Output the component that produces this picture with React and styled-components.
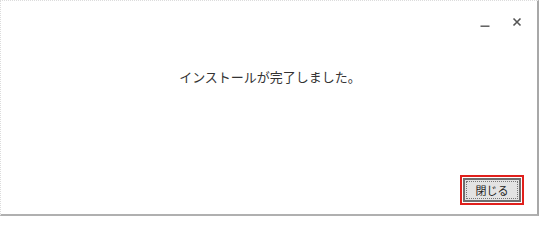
import React from "react";
import styled, { createGlobalStyle } from "styled-components";

const Global = createGlobalStyle`
  html, body {
    margin: 0;
    padding: 0;
    background: #ffffff;
  }
  body {
    font-family: "Noto Sans CJK JP", "Noto Sans", sans-serif;
  }
`;

const Window = styled.div`
  box-sizing: border-box;
  width: 539px;
  height: 216px;
  background: #ffffff;
  border-top: 1px dotted #dcdcdc;
  border-left: 1px dotted #dcdcdc;
  border-right: 2px solid #a8a8a8;
  border-bottom: 2px solid #b0b0b0;
  display: flex;
  flex-direction: column;
`;

const TitleBar = styled.div`
  display: flex;
  justify-content: flex-end;
  align-items: center;
  gap: 10px;
  height: 41px;
  padding-right: 9px;
`;

const Control = styled.button`
  width: 22px;
  height: 22px;
  padding: 0;
  border: none;
  background: transparent;
  display: flex;
  align-items: center;
  justify-content: center;
  cursor: pointer;
`;

const Body = styled.div`
  flex: 1;
  display: flex;
  justify-content: center;
  padding-top: 25px;
  padding-left: 2px;
`;

const Message = styled.p`
  margin: 0;
  font-size: 13px;
  line-height: 20px;
  color: #333333;
`;

const Footer = styled.div`
  display: flex;
  justify-content: flex-end;
  padding: 0 13px 9px 0;
`;

const FocusRing = styled.div`
  border: 2px solid #e0201c;
  padding: 1px;
`;

const Button = styled.button`
  box-sizing: border-box;
  width: 58px;
  height: 24px;
  padding: 1px;
  border: 2px solid #6e6e6e;
  background: #e3e3e3;
  display: flex;
  cursor: pointer;
`;

const ButtonInner = styled.span`
  flex: 1;
  display: flex;
  align-items: center;
  justify-content: center;
  border: 1px dotted #777777;
  font-family: "Noto Sans CJK JP", sans-serif;
  font-size: 11px;
  color: #222222;
  line-height: 1;
`;

export default function App() {
  return (
    <>
      <Global />
      <Window>
        <TitleBar>
          <Control aria-label="minimize">
            <svg width="12" height="12" viewBox="0 0 12 12">
              <rect x="1.5" y="9.5" width="9" height="1.4" fill="#555" />
            </svg>
          </Control>
          <Control aria-label="close">
            <svg width="12" height="12" viewBox="0 0 12 12">
              <path d="M2.5 2.5 L9.5 9.5 M9.5 2.5 L2.5 9.5" stroke="#555" strokeWidth="1.6" />
            </svg>
          </Control>
        </TitleBar>
        <Body>
          <Message>インストールが完了しました。</Message>
        </Body>
        <Footer>
          <FocusRing>
            <Button>
              <ButtonInner>閉じる</ButtonInner>
            </Button>
          </FocusRing>
        </Footer>
      </Window>
    </>
  );
}
